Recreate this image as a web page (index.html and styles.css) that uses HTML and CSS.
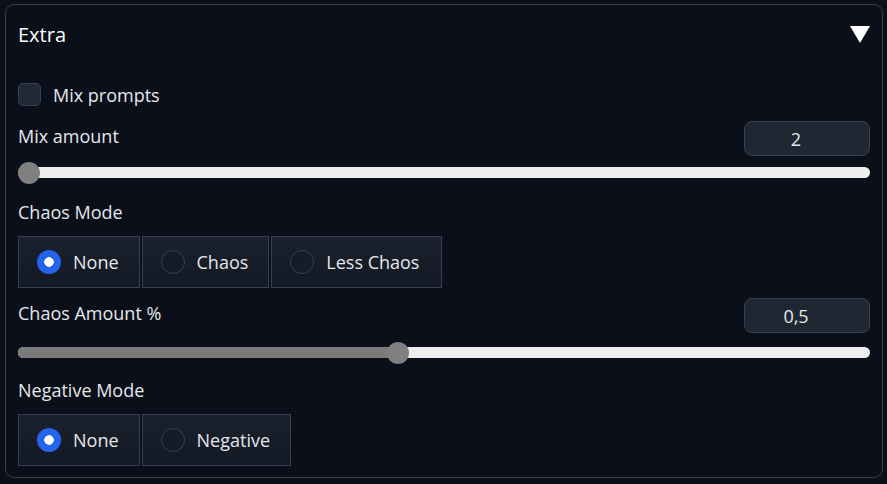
FILE: index.html
```html
<!DOCTYPE html>
<html>
<head>
<meta charset="utf-8">
<link rel="stylesheet" href="styles.css">
</head>
<body>
<div class="panel">
  <div class="header">
    <span class="title">Extra</span>
    <span class="caret"></span>
  </div>
  <label class="check-row">
    <span class="checkbox"></span>
    <span class="check-label">Mix prompts</span>
  </label>
  <div class="field-row">
    <span class="label">Mix amount</span>
    <div class="num-box">2</div>
  </div>
  <div class="slider">
    <div class="fill" style="width:11px"></div>
    <div class="thumb" style="left:0px"></div>
  </div>
  <div class="label block-label">Chaos Mode</div>
  <div class="radio-group">
    <div class="radio-item selected"><span class="radio"></span><span>None</span></div>
    <div class="radio-item"><span class="radio"></span><span>Chaos</span></div>
    <div class="radio-item wide"><span class="radio"></span><span>Less Chaos</span></div>
  </div>
  <div class="field-row second">
    <span class="label">Chaos Amount %</span>
    <div class="num-box">0,5</div>
  </div>
  <div class="slider second">
    <div class="fill" style="width:380px"></div>
    <div class="thumb" style="left:369px"></div>
  </div>
  <div class="label block-label second">Negative Mode</div>
  <div class="radio-group">
    <div class="radio-item selected"><span class="radio"></span><span>None</span></div>
    <div class="radio-item"><span class="radio"></span><span>Negative</span></div>
  </div>
</div>
</body>
</html>
```
FILE: styles.css
```css
html, body {
  margin: 0;
  padding: 0;
  background: #0b0f19;
}
body {
  font-family: "Open Sans", "Noto Sans", sans-serif;
  color: #e5e7eb;
  width: 887px;
  height: 484px;
  overflow: hidden;
}
.panel {
  box-sizing: border-box;
  margin: 4px 4px 0 5px;
  height: 474px;
  border: 1px solid #374151;
  border-radius: 9px;
  padding: 0 12px;
  display: flex;
  flex-direction: column;
}
.header {
  display: flex;
  justify-content: space-between;
  align-items: center;
  height: 58px;
}
.title {
  font-size: 20px;
  font-weight: 500;
  color: #ffffff;
}
.caret {
  width: 0;
  height: 0;
  border-left: 10px solid transparent;
  border-right: 10px solid transparent;
  border-top: 17px solid #ffffff;
}
.check-row {
  display: flex;
  align-items: center;
  gap: 12px;
  margin-top: 20px;
  height: 23px;
}
.checkbox {
  box-sizing: border-box;
  width: 23px;
  height: 23px;
  border-radius: 5px;
  background: #1f2937;
  border: 1px solid #374151;
}
.check-label,
.label {
  font-size: 18px;
  font-weight: 500;
  color: #e5e7eb;
}
.field-row {
  display: flex;
  justify-content: space-between;
  align-items: flex-start;
  margin-top: 15px;
  height: 35px;
}
.field-row .label {
  line-height: 30px;
}
.field-row.second {
  margin-top: 10px;
}
.num-box {
  box-sizing: border-box;
  width: 126px;
  height: 35px;
  border: 1px solid #374151;
  border-radius: 8px;
  background: #1f2732;
  color: #e5e7eb;
  font-size: 18px;
  font-weight: 500;
  display: flex;
  align-items: center;
  justify-content: center;
  padding-right: 22px;
}
.slider {
  position: relative;
  height: 22px;
  margin-top: 6px;
}
.slider.second {
  margin-top: 9px;
}
.slider::before {
  content: "";
  position: absolute;
  left: 0;
  right: 0;
  top: 5px;
  height: 11px;
  border-radius: 6px;
  background: #ecedec;
}
.fill {
  position: absolute;
  left: 0;
  top: 5px;
  height: 11px;
  border-radius: 6px;
  background: #7b7b7a;
}
.thumb {
  position: absolute;
  top: 0;
  width: 22px;
  height: 22px;
  border-radius: 50%;
  background: #808080;
}
.block-label {
  margin-top: 16px;
  line-height: 24px;
}
.block-label.second {
  margin-top: 14px;
}
.radio-group {
  display: flex;
  gap: 2px;
  margin-top: 12px;
}
.radio-item {
  box-sizing: border-box;
  height: 52px;
  display: flex;
  align-items: center;
  gap: 12px;
  padding: 0 20px 0 18px;
  border: 1px solid #374151;
  background: linear-gradient(to bottom, #1a202c, #141a25);
  font-size: 18px;
  font-weight: 500;
  color: #e5e7eb;
}
.radio-item.wide {
  padding-right: 22px;
}
.radio {
  box-sizing: border-box;
  width: 24px;
  height: 24px;
  border-radius: 50%;
  border: 1px solid #374151;
  background: #161c27;
}
.selected .radio {
  border: none;
  background: radial-gradient(circle, #ffffff 0 4.5px, #2563eb 5px);
}
```
